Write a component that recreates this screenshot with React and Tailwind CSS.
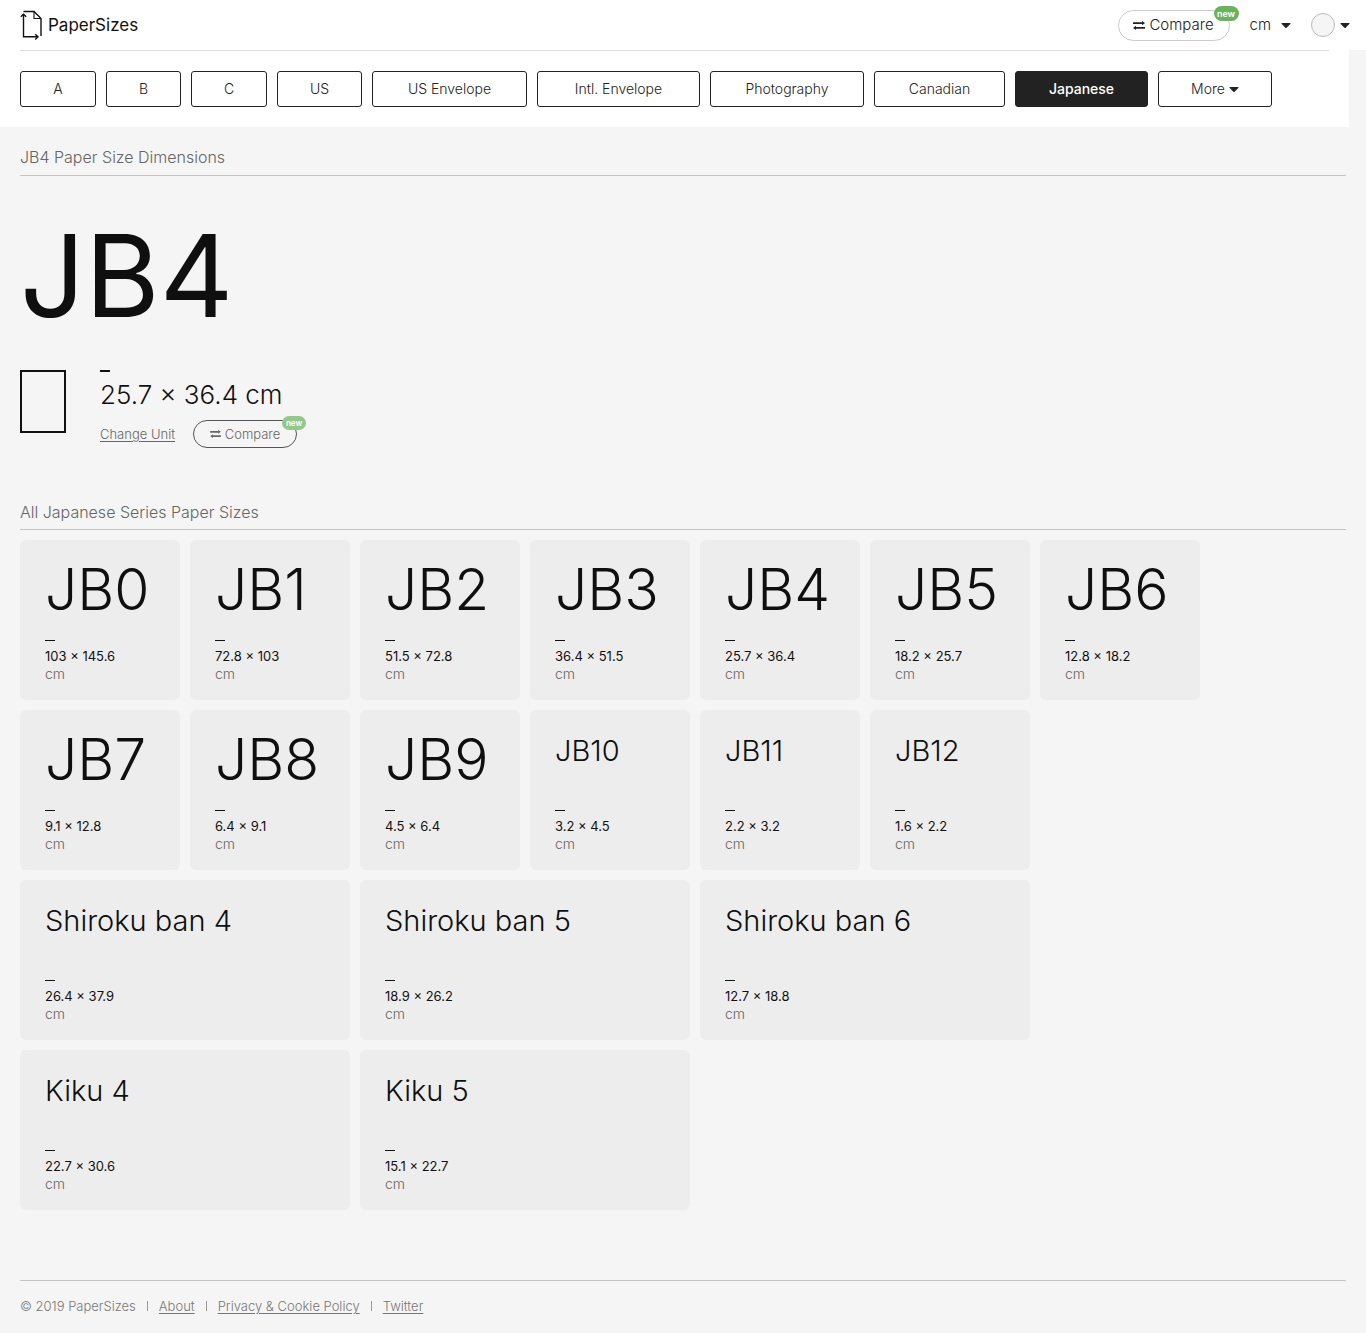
const series = [
    { name: "A", width: "w-[76px]" },
    { name: "B", width: "w-[75px]" },
    { name: "C", width: "w-[76px]" },
    { name: "US", width: "w-[85px]" },
    { name: "US Envelope", width: "w-[155px]" },
    { name: "Intl. Envelope", width: "w-[163px]" },
    { name: "Photography", width: "w-[154px]" },
    { name: "Canadian", width: "w-[131px]" },
    { name: "Japanese", width: "w-[133px]", active: true },
];

const sizes = [
    { name: "JB0", size: "103 × 145.6" },
    { name: "JB1", size: "72.8 × 103" },
    { name: "JB2", size: "51.5 × 72.8" },
    { name: "JB3", size: "36.4 × 51.5" },
    { name: "JB4", size: "25.7 × 36.4" },
    { name: "JB5", size: "18.2 × 25.7" },
    { name: "JB6", size: "12.8 × 18.2" },
    { name: "JB7", size: "9.1 × 12.8" },
    { name: "JB8", size: "6.4 × 9.1" },
    { name: "JB9", size: "4.5 × 6.4" },
    { name: "JB10", size: "3.2 × 4.5" },
    { name: "JB11", size: "2.2 × 3.2" },
    { name: "JB12", size: "1.6 × 2.2" },
    { name: "Shiroku ban 4", size: "26.4 × 37.9", wide: true },
    { name: "Shiroku ban 5", size: "18.9 × 26.2", wide: true },
    { name: "Shiroku ban 6", size: "12.7 × 18.8", wide: true },
    { name: "Kiku 4", size: "22.7 × 30.6", wide: true },
    { name: "Kiku 5", size: "15.1 × 22.7", wide: true },
];

const Logo = () => (
    <svg className="w-[22px] h-[30px]" viewBox="0 0 22 30" fill="none" stroke="#111" strokeWidth="1.4">
        <path d="M3.5 1.5H14L21 8.5V26" />
        <path d="M14 1.5V8.5H21" strokeWidth="1.1" />
        <path d="M3.5 4.5V26.8H17.5" />
        <path d="M0.8 6.8L3.5 4.2L6.2 6.8" />
        <path d="M15.2 24.2L18 26.8L15.2 29.4" />
    </svg>
);

const Caret = () => (
    <svg className="w-[10px] h-[5px]" viewBox="0 0 10 5" fill="currentColor">
        <path d="M0.8 0H9.2Q9.8 0.3 9.3 0.9L5.6 4.7Q5 5.1 4.4 4.7L0.7 0.9Q0.2 0.3 0.8 0Z" />
    </svg>
);

const Exchange = ({ className }) => (
    <svg className={className} viewBox="0 0 12 9" fill="currentColor">
        <path d="M0 1.2H9V0L12 2.1L9 4.2V3H0Z" />
        <path d="M12 6H3V4.8L0 6.9L3 9V7.8H12Z" />
    </svg>
);

const SizeCard = ({ name, size, wide }) => (
    <a
        href="#"
        className={`flex flex-col h-40 rounded-md bg-[#ededed] px-[25px] pt-5 ${wide ? "w-[330px]" : "w-40"}`}
    >
        <h3 className={`h-20 text-[#0f0f0f] font-light ${name.length > 3 ? "text-[29px] leading-[42px]" : "text-[57px] leading-[60px]"}`}>
            {name}
        </h3>
        <span className="w-[10px] h-px bg-[#111]"></span>
        <span className="mt-[6px] text-[13px] leading-[18px] text-[#111]">{size}</span>
        <span className="text-[14px] leading-[18px] font-light text-[#666]">cm</span>
    </a>
);

const App = () => {
    return (
        <div className="min-h-screen bg-[#f5f5f5] font-['Inter','Liberation_Sans',sans-serif] text-[#222]">
            <header className="flex items-center justify-between h-[50px] bg-white pl-5 pr-4">
                <a href="#" className="flex items-center gap-[6px] text-[17px] leading-6 text-[#111]">
                    <Logo />
                    PaperSizes
                </a>
                <div className="flex items-center text-[15px] leading-5 font-light">
                    <button className="relative flex items-center justify-center gap-1 w-28 h-[31px] rounded-full border border-[#ccc]">
                        <Exchange className="w-3 h-[9px]" />
                        Compare
                        <span className="absolute -top-[5px] -right-[10px] w-[25px] h-[15px] rounded-full bg-[#6cb15f] text-white text-[9px] leading-[15px] font-semibold">
                            new
                        </span>
                    </button>
                    <button className="flex items-center gap-[10px] ml-5">
                        cm
                        <Caret />
                    </button>
                    <button aria-label="Theme" className="flex items-center gap-[5px] ml-5">
                        <span className="w-6 h-6 rounded-full border border-[#bbb] bg-[#f5f5f5]"></span>
                        <Caret />
                    </button>
                </div>
            </header>

            <nav className="mr-[17px] bg-white px-5 pb-5">
                <div className="flex flex-wrap gap-[10px] border-t border-[#ddd] pt-5 text-[14px] leading-5 font-light">
                    {series.map((item) => (
                        <a
                            key={item.name}
                            href="#"
                            className={`flex items-center justify-center h-9 rounded-[3px] border border-[#222] ${item.width} ${item.active ? "bg-[#222] text-white font-medium" : ""}`}
                        >
                            {item.name}
                        </a>
                    ))}
                    <button className="flex items-center justify-center gap-1 w-[114px] h-9 rounded-[3px] border border-[#222]">
                        More
                        <Caret />
                    </button>
                </div>
            </nav>

            <main className="px-5">
                <h2 className="h-[49px] border-b border-[#c4c4c4] pt-5 text-[16px] leading-5 font-light text-[#666]">
                    JB4 Paper Size Dimensions
                </h2>
                <h1 className="mt-10 text-[114px] leading-[120px] text-[#0f0f0f]">JB4</h1>

                <div className="flex items-start mt-[34px]">
                    <div className="w-[46px] h-[63px] border-2 border-[#111]"></div>
                    <div className="ml-[34px]">
                        <div className="w-[10px] h-[2px] bg-[#111]"></div>
                        <p className="mt-2 text-[26px] leading-[30px] font-light text-[#111]">25.7 × 36.4 cm</p>
                        <div className="flex items-center gap-[18px] mt-[10px] text-[13px] leading-[18px] font-light text-[#666]">
                            <a href="#" className="underline underline-offset-2">Change Unit</a>
                            <button className="relative flex items-center justify-center gap-1 w-[104px] h-7 rounded-full border border-[#555]">
                                <Exchange className="w-[11px] h-2" />
                                Compare
                                <span className="absolute -top-[5px] -right-[10px] w-6 h-[14px] rounded-full bg-[#94c88b] text-white text-[8px] leading-[14px] font-semibold">
                                    new
                                </span>
                            </button>
                        </div>
                    </div>
                </div>

                <h2 className="mt-[54px] border-b border-[#c4c4c4] pb-[7px] text-[16px] leading-5 font-light text-[#666]">
                    All Japanese Series Paper Sizes
                </h2>
                <div className="flex flex-wrap gap-[10px] mt-[10px]">
                    {sizes.map((item) => (
                        <SizeCard key={item.name} {...item} />
                    ))}
                </div>
            </main>

            <footer className="flex items-center mx-5 mt-[70px] border-t border-[#c4c4c4] h-[53px] pb-[2px] text-[13px] leading-[18px] font-light text-[#777]">
                <span>© 2019 PaperSizes</span>
                <span className="w-px h-[10px] mx-[11px] bg-[#999]"></span>
                <a href="#" className="underline underline-offset-2">About</a>
                <span className="w-px h-[10px] mx-[11px] bg-[#999]"></span>
                <a href="#" className="underline underline-offset-2">Privacy & Cookie Policy</a>
                <span className="w-px h-[10px] mx-[11px] bg-[#999]"></span>
                <a href="#" className="underline underline-offset-2">Twitter</a>
            </footer>
        </div>
    );
};

export default App;
